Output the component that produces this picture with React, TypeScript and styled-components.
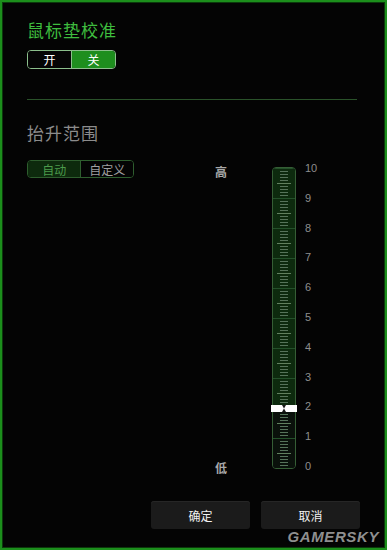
import { FC } from 'react';
import styled, { createGlobalStyle } from 'styled-components';

const GlobalStyle = createGlobalStyle`
  html, body {
    margin: 0;
    padding: 0;
    background: #000;
  }
`;

const CJK = `'Noto Sans CJK SC', 'Liberation Sans', sans-serif`;

const Panel = styled.div`
  position: relative;
  box-sizing: border-box;
  width: 387px;
  height: 550px;
  border: 2px solid #1c8f1c;
  box-shadow: inset 0 0 0 1px #0b3a0b;
  background: #040404;
  padding: 16px 25px 19px 25px;
  display: flex;
  flex-direction: column;
  font-family: ${CJK};
  overflow: hidden;
`;

const Title = styled.div<{ $green?: boolean }>`
  font-size: 17px;
  line-height: 24px;
  letter-spacing: 1px;
  color: ${p => (p.$green ? '#3fbd3f' : '#8c8c8c')};
`;

const Toggle = styled.div`
  display: flex;
  width: 89px;
  height: 19px;
  margin-top: 8px;
  border: 1px solid #8cbf8c;
  border-radius: 4px;
  overflow: hidden;
  box-sizing: border-box;
`;

const ToggleHalf = styled.div<{ $on?: boolean }>`
  flex: 1;
  display: flex;
  align-items: center;
  justify-content: center;
  font-size: 12px;
  color: #fff;
  background: ${p => (p.$on ? '#1e8e1e' : '#050505')};
  & + & {
    border-left: 1px solid #8cbf8c;
  }
`;

const Divider = styled.div`
  height: 1px;
  margin: 30px 3px 0 0;
  background: #2a522a;
`;

const SectionTitle = styled(Title)`
  margin-top: 21px;
`;

const Body = styled.div`
  display: grid;
  grid-template-columns: 188px auto;
  margin-top: 15px;
`;

const Segmented = styled.div`
  display: flex;
  align-self: start;
  width: 107px;
  height: 18px;
  box-sizing: border-box;
  border: 1px solid #2e5e2e;
  border-radius: 4px;
  overflow: hidden;
`;

const Segment = styled.div<{ $active?: boolean; $w: number }>`
  width: ${p => p.$w}px;
  display: flex;
  align-items: center;
  justify-content: center;
  font-size: 12px;
  color: ${p => (p.$active ? '#4c9a4c' : '#a0a0a0')};
  background: ${p => (p.$active ? '#0d2a0d' : '#040404')};
  & + & {
    border-left: 1px solid #2e5e2e;
  }
`;

const Scale = styled.div`
  display: flex;
  align-items: flex-start;
  padding-top: 7px;
`;

const EndLabels = styled.div`
  display: flex;
  flex-direction: column;
  justify-content: space-between;
  width: 14px;
  height: 310px;
  margin-top: -2px;
  font-size: 12px;
  font-weight: bold;
  line-height: 14px;
  color: #a8a8a8;
`;

const Track = styled.div`
  position: relative;
  width: 24px;
  height: 302px;
  margin-left: 43px;
  box-sizing: border-box;
  border: 1px solid #355e35;
  border-radius: 4px;

  > svg.ticks {
    display: block;
    border-radius: 3px;
  }
`;

const Thumb = styled.svg`
  position: absolute;
  left: -2px;
  width: 26px;
  height: 7px;
`;

const Numbers = styled.div`
  display: flex;
  flex-direction: column;
  justify-content: space-between;
  height: 310px;
  margin-top: -5px;
  margin-left: 9px;
  font-family: 'Liberation Sans', Arial, sans-serif;
  font-size: 11px;
  line-height: 12px;
  color: #8e8e8e;
`;

const Actions = styled.div`
  display: flex;
  justify-content: flex-end;
  gap: 11px;
  margin-top: auto;
`;

const ActionButton = styled.button`
  width: 99px;
  height: 28px;
  border: none;
  border-radius: 3px;
  background: #1b1b1b;
  box-shadow: inset 0 1px 0 #262626;
  color: #f2f2f2;
  font-family: ${CJK};
  font-size: 12px;
  padding: 0;
`;

const Watermark = styled.div`
  position: absolute;
  right: 6px;
  bottom: 3px;
  font-family: 'Liberation Sans', Arial, sans-serif;
  font-weight: bold;
  font-style: italic;
  font-size: 15px;
  letter-spacing: 0.6px;
  color: #8f8f8f;
  text-shadow: 0 0 2px #000;
`;

const UNIT = 30;
const MAX = 10;

const HeightTrack: FC<{ value: number }> = ({ value }) => {
  const inner = MAX * UNIT;
  const fillFromBottom = value * UNIT;
  const ticks = [];
  for (let i = 0; i <= MAX * 10; i++) {
    const y = i * 3 + 0.5;
    if (i % 10 === 0) {
      ticks.push(<line key={i} x1={0} x2={22} y1={y} y2={y} stroke='#24502a' strokeWidth={1} />);
    } else if (i % 5 === 0) {
      ticks.push(<line key={i} x1={4} x2={18} y1={y} y2={y} stroke='#61805f' strokeWidth={1} />);
    } else {
      ticks.push(<line key={i} x1={7} x2={15} y1={y} y2={y} stroke='#56735a' strokeWidth={1} />);
    }
  }
  const thumbTop = (MAX - value) * UNIT + 1 - 4;
  return (
    <Track>
      <svg className='ticks' width={22} height={inner} viewBox={`0 0 22 ${inner}`}>
        <rect x={0} y={0} width={22} height={inner - fillFromBottom} fill='#0d2a0e' />
        <rect x={0} y={inner - fillFromBottom} width={22} height={fillFromBottom} fill='#0a110b' />
        {ticks}
      </svg>
      <Thumb viewBox='0 0 26 7' style={{ top: thumbTop }}>
        <rect x={0} y={0} width={26} height={7} fill='#ffffff' />
        <polygon points='11,0 15,0 13,3.5' fill='#1a1a1a' />
        <polygon points='11,7 15,7 13,3.5' fill='#1a1a1a' />
      </Thumb>
    </Track>
  );
};

export default function App() {
  const numbers = [10, 9, 8, 7, 6, 5, 4, 3, 2, 1, 0];
  return (
    <>
      <GlobalStyle />
      <Panel>
        <Title $green>鼠标垫校准</Title>
        <Toggle>
          <ToggleHalf>开</ToggleHalf>
          <ToggleHalf $on>关</ToggleHalf>
        </Toggle>
        <Divider />
        <SectionTitle>抬升范围</SectionTitle>
        <Body>
          <Segmented>
            <Segment $active $w={54}>自动</Segment>
            <Segment $w={53}>自定义</Segment>
          </Segmented>
          <Scale>
            <EndLabels>
              <span>高</span>
              <span>低</span>
            </EndLabels>
            <HeightTrack value={2} />
            <Numbers>
              {numbers.map(n => (
                <span key={n}>{n}</span>
              ))}
            </Numbers>
          </Scale>
        </Body>
        <Actions>
          <ActionButton>确定</ActionButton>
          <ActionButton>取消</ActionButton>
        </Actions>
        <Watermark>GAMERSKY</Watermark>
      </Panel>
    </>
  );
}
